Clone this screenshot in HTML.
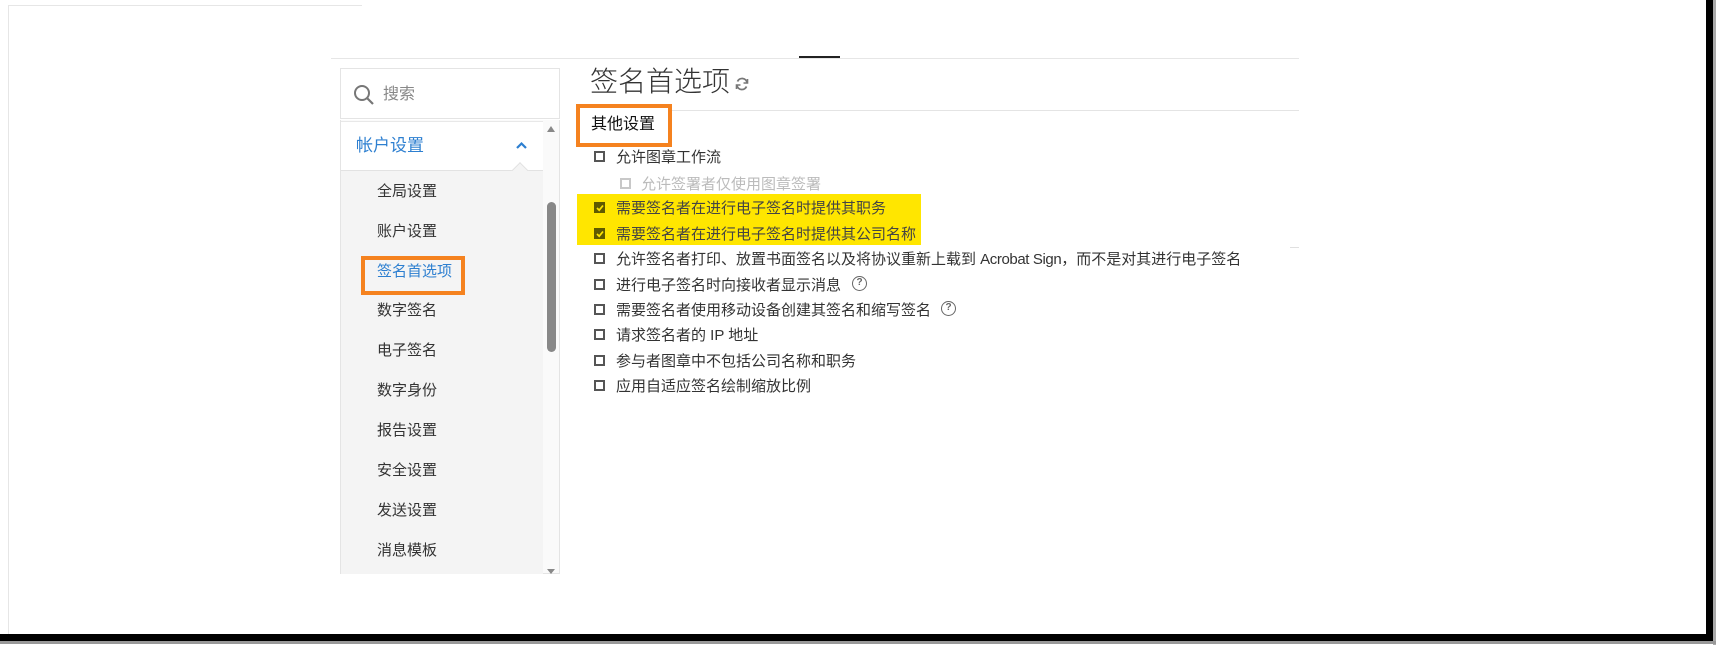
<!DOCTYPE html>
<html><head><meta charset="utf-8"><style>
*{margin:0;padding:0;box-sizing:border-box}
body{width:1716px;height:648px;background:#fff;position:relative;overflow:hidden;font-family:"Liberation Sans","Noto Sans CJK SC",sans-serif;color:#333}
.a{position:absolute}
.t{position:absolute;white-space:nowrap;line-height:1}
.cb{position:absolute;width:11px;height:11px;border:2px solid #555;background:#fff}
.row{font-size:15px;color:#333}
.side{font-size:15px;color:#333}
.q{position:absolute;width:15px;height:15px;border:1.6px solid #666;border-radius:50%;font-size:10px;font-weight:bold;color:#666;text-align:center;line-height:12px}
</style></head><body>
<!-- frame -->
<div class="a" style="left:8px;top:5px;width:354px;height:1px;background:#e6e6e6"></div>
<div class="a" style="left:8px;top:5px;width:1px;height:630px;background:#e6e6e6"></div>
<div class="a" style="left:1706px;top:0;width:7px;height:642px;background:#000"></div>
<div class="a" style="left:1713px;top:0;width:3px;height:645px;background:#aaa"></div>
<div class="a" style="left:0;top:634px;width:1713px;height:7px;background:#000"></div>
<div class="a" style="left:0;top:641px;width:1716px;height:3px;background:#999"></div>
<!-- top line -->
<div class="a" style="left:331px;top:58px;width:968px;height:1px;background:#e6e6e6"></div>
<div class="a" style="left:799px;top:56px;width:41px;height:2px;background:#222"></div>
<!-- search -->
<div class="a" style="left:340px;top:68px;width:220px;height:51px;border:1px solid #e4e4e4;background:#fff"></div>
<svg class="a" style="left:353px;top:84px" width="22" height="22" viewBox="0 0 22 22"><circle cx="9" cy="9" r="7" fill="none" stroke="#777" stroke-width="2"/><line x1="14" y1="14" x2="20" y2="20" stroke="#777" stroke-width="2.2"/></svg>
<div class="t" style="left:383px;top:87px;font-size:16px;color:#888">搜索</div>
<!-- sidebar -->
<div class="a" style="left:340px;top:120px;width:220px;height:454px;border:1px solid #e4e4e4;border-top:none;background:#fafafa"></div>
<div class="a" style="left:341px;top:170px;width:202px;height:404px;background:#f4f4f4"></div>
<div class="a" style="left:341px;top:121px;width:202px;height:50px;background:#fff;border-bottom:1px solid #e2e2e2;border-top:1px solid #e8e8e8"></div>
<div class="a" style="left:508px;top:160px;width:24px;height:11px;overflow:hidden"><div class="a" style="left:5px;top:5px;width:14px;height:14px;background:#f4f4f4;transform:rotate(45deg);border-left:1px solid #e2e2e2;border-top:1px solid #e2e2e2"></div></div>
<div class="t" style="left:356px;top:137px;font-size:17px;color:#2d7fd0">帐户设置</div>
<svg class="a" style="left:515px;top:141px" width="13" height="9" viewBox="0 0 13 9"><path d="M2 7 L6.5 2.5 L11 7" fill="none" stroke="#2d7fd0" stroke-width="2.2"/></svg>
<div class="a" style="left:547px;top:126px;width:0;height:0;border-left:4.5px solid transparent;border-right:4.5px solid transparent;border-bottom:6px solid #888"></div>
<div class="a" style="left:547px;top:202px;width:9px;height:150px;border-radius:5px;background:#888"></div>
<div class="a" style="left:547px;top:569px;width:0;height:0;border-left:4.5px solid transparent;border-right:4.5px solid transparent;border-top:5px solid #888"></div>
<div class="t side" style="left:377px;top:184px">全局设置</div>
<div class="t side" style="left:377px;top:224px">账户设置</div>
<div class="t side" style="left:377px;top:264px;color:#2d7fd0">签名首选项</div>
<div class="a" style="left:361px;top:256px;width:104px;height:39px;border:4px solid #f5821f"></div>
<div class="t side" style="left:377px;top:303px">数字签名</div>
<div class="t side" style="left:377px;top:343px">电子签名</div>
<div class="t side" style="left:377px;top:383px">数字身份</div>
<div class="t side" style="left:377px;top:423px">报告设置</div>
<div class="t side" style="left:377px;top:463px">安全设置</div>
<div class="t side" style="left:377px;top:503px">发送设置</div>
<div class="t side" style="left:377px;top:543px">消息模板</div>
<!-- right -->
<div class="t" style="left:590px;top:68px;font-size:28px;color:#333;font-weight:300">签名首选项</div>
<svg class="a" style="left:734px;top:76px" width="16" height="16" viewBox="0 0 16 16"><path d="M13 6.5 A5 5 0 0 0 3.5 5.5 M3 9.5 A5 5 0 0 0 12.5 10.5" fill="none" stroke="#777" stroke-width="1.8"/><path d="M13.5 3 L13.5 7 L9.5 7" fill="none" stroke="#777" stroke-width="1.6"/><path d="M2.5 13 L2.5 9 L6.5 9" fill="none" stroke="#777" stroke-width="1.6"/></svg>
<div class="a" style="left:580px;top:110px;width:719px;height:1px;background:#e4e4e4"></div>
<div class="a" style="left:576px;top:104px;width:96px;height:43px;border:4px solid #f5821f;background:#fff"></div>
<div class="t" style="left:591px;top:117px;font-size:16px;color:#111">其他设置</div>
<div class="a" style="left:577px;top:194px;width:344px;height:51px;background:#ffe600"></div>
<div class="a" style="left:1290px;top:247px;width:9px;height:1px;background:#e0e0e0"></div>
<div class="cb" style="left:594px;top:151px"></div><div class="t row" style="left:616px;top:150px">允许图章工作流</div>
<div class="cb" style="left:620px;top:178px;border-color:#c8c8c8"></div><div class="t row" style="left:641px;top:177px;color:#bbb">允许签署者仅使用图章签署</div>
<div class="cb" style="left:594px;top:202px;background:#5f5a00;border-color:#5f5a00"></div>
<svg class="a" style="left:596px;top:204px" width="8" height="8" viewBox="0 0 8 8"><path d="M1 4 L3.2 6.2 L7 1.5" fill="none" stroke="#ffe600" stroke-width="1.7"/></svg>
<div class="t row" style="left:616px;top:201px;color:#444">需要签名者在进行电子签名时提供其职务</div>
<div class="cb" style="left:594px;top:228px;background:#5f5a00;border-color:#5f5a00"></div>
<svg class="a" style="left:596px;top:230px" width="8" height="8" viewBox="0 0 8 8"><path d="M1 4 L3.2 6.2 L7 1.5" fill="none" stroke="#ffe600" stroke-width="1.7"/></svg>
<div class="t row" style="left:616px;top:227px;color:#444">需要签名者在进行电子签名时提供其公司名称</div>
<div class="cb" style="left:594px;top:253px"></div><div class="t row" style="left:616px;top:252px">允许签名者打印、放置书面签名以及将协议重新上载到 <span style="letter-spacing:-0.4px">Acrobat Sign</span>，而不是对其进行电子签名</div>
<div class="cb" style="left:594px;top:279px"></div><div class="t row" style="left:616px;top:278px">进行电子签名时向接收者显示消息</div>
<div class="q" style="left:852px;top:276px">?</div>
<div class="cb" style="left:594px;top:304px"></div><div class="t row" style="left:616px;top:303px">需要签名者使用移动设备创建其签名和缩写签名</div>
<div class="q" style="left:941px;top:301px">?</div>
<div class="cb" style="left:594px;top:329px"></div><div class="t row" style="left:616px;top:328px">请求签名者的 IP 地址</div>
<div class="cb" style="left:594px;top:355px"></div><div class="t row" style="left:616px;top:354px">参与者图章中不包括公司名称和职务</div>
<div class="cb" style="left:594px;top:380px"></div><div class="t row" style="left:616px;top:379px">应用自适应签名绘制缩放比例</div>
</body></html>
